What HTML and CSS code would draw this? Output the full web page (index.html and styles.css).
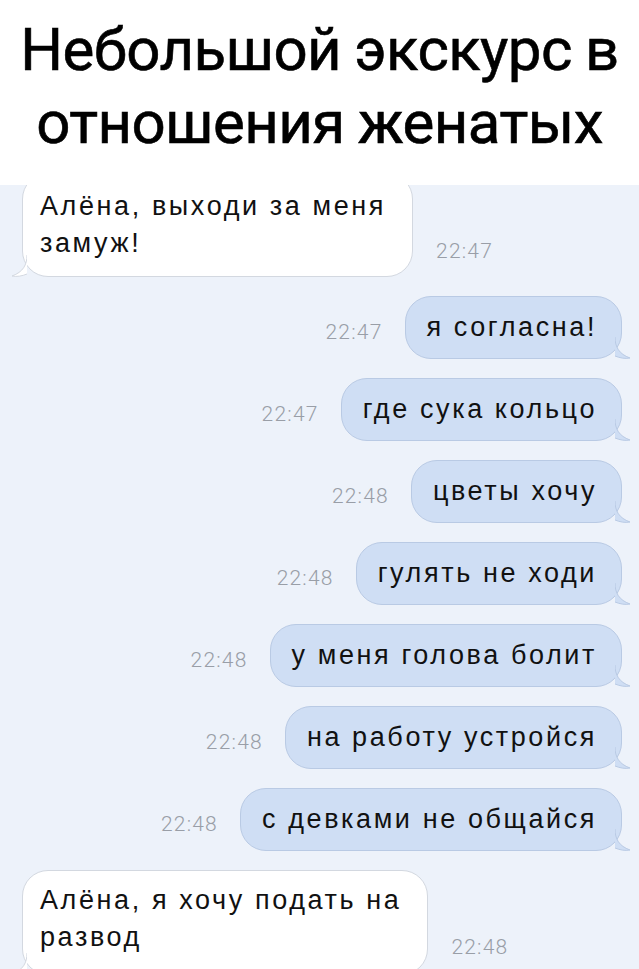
FILE: index.html
```html
<!DOCTYPE html>
<html lang="ru">
<head>
  <meta charset="UTF-8" />
  <title>Небольшой экскурс</title>
  <link rel="stylesheet" href="styles.css">
</head>
<body>

  <h1 class="title">Небольшой экскурс в<br>отношения женатых</h1>

  <div class="chat">
    <div class="row in first">
      <div class="bubble">Алёна, выходи за меня<br>замуж!
        <svg class="tail" viewBox="0 0 16 22"><path d="M16 0 C16 10 12 17 1 21 C6 22 11 21 16 19" /></svg>
      </div>
      <span class="time">22:47</span>
    </div>

    <div class="row out">
      <span class="time">22:47</span>
      <div class="bubble">я согласна!
        <svg class="tail" viewBox="0 0 16 22"><path d="M0 0 C0 10 4 17 15 21 C10 22 5 21 0 19" /></svg>
      </div>
    </div>

    <div class="row out">
      <span class="time">22:47</span>
      <div class="bubble">где сука кольцо
        <svg class="tail" viewBox="0 0 16 22"><path d="M0 0 C0 10 4 17 15 21 C10 22 5 21 0 19" /></svg>
      </div>
    </div>

    <div class="row out">
      <span class="time">22:48</span>
      <div class="bubble">цветы хочу
        <svg class="tail" viewBox="0 0 16 22"><path d="M0 0 C0 10 4 17 15 21 C10 22 5 21 0 19" /></svg>
      </div>
    </div>

    <div class="row out">
      <span class="time">22:48</span>
      <div class="bubble">гулять не ходи
        <svg class="tail" viewBox="0 0 16 22"><path d="M0 0 C0 10 4 17 15 21 C10 22 5 21 0 19" /></svg>
      </div>
    </div>

    <div class="row out">
      <span class="time">22:48</span>
      <div class="bubble">у меня голова болит
        <svg class="tail" viewBox="0 0 16 22"><path d="M0 0 C0 10 4 17 15 21 C10 22 5 21 0 19" /></svg>
      </div>
    </div>

    <div class="row out">
      <span class="time">22:48</span>
      <div class="bubble">на работу устройся
        <svg class="tail" viewBox="0 0 16 22"><path d="M0 0 C0 10 4 17 15 21 C10 22 5 21 0 19" /></svg>
      </div>
    </div>

    <div class="row out">
      <span class="time">22:48</span>
      <div class="bubble">с девками не общайся
        <svg class="tail" viewBox="0 0 16 22"><path d="M0 0 C0 10 4 17 15 21 C10 22 5 21 0 19" /></svg>
      </div>
    </div>

    <div class="row in last">
      <div class="bubble">Алёна, я хочу подать на<br>развод
        <svg class="tail" viewBox="0 0 16 22"><path d="M16 0 C16 10 12 17 1 21 C6 22 11 21 16 19" /></svg>
      </div>
      <span class="time">22:48</span>
    </div>
  </div>

</body>
</html>
```

FILE: styles.css
```css
body {
  margin: 0;
  background: #fff;
  font-family: "Liberation Sans", Arial, sans-serif;
  color: #111;
}

.title {
  margin: 0;
  height: 185px;
  padding-top: 13px;
  box-sizing: border-box;
  text-align: center;
  font-family: Roboto, "Liberation Sans", sans-serif;
  font-weight: 400;
  font-size: 60px;
  line-height: 73px;
  letter-spacing: -0.6px;
  word-spacing: -1px;
  color: #000;
  -webkit-text-stroke: 0.6px #000;
}

.chat {
  height: 784px;
  overflow: hidden;
  background: #edf2fa;
  padding: 0 17px 0 22px;
  display: flex;
  flex-direction: column;
  gap: 19px;
}

.row {
  display: flex;
  align-items: center;
  gap: 22px;
}
.row.out { justify-content: flex-end; }
.row.in { align-items: flex-end; gap: 23px; }
.row.first { margin-top: -12px; }

.bubble {
  position: relative;
  font-size: 27px;
  letter-spacing: 2.6px;
  line-height: 33px;
  padding: 14px 24px 14px 21px;
  border-radius: 26px;
  border: 1px solid #b9cae4;
  background: #cfdef4;
  white-space: nowrap;
}

.in .bubble {
  background: #fff;
  border-color: #d3d8e0;
  line-height: 37px;
  padding: 14px 26px 14px 17px;
}
.last .bubble { padding-top: 11px; padding-bottom: 18px; }

.time {
  font-family: Roboto, "Liberation Sans", sans-serif;
  font-weight: 300;
  font-size: 21px;
  letter-spacing: 1.2px;
  color: #999ea7;
  padding-top: 8px;
}
.in .time { padding-bottom: 14px; }
.last .time { padding-bottom: 16px; }

.tail {
  position: absolute;
  bottom: -1px;
  width: 16px;
  height: 22px;
  fill: #cfdef4;
  stroke: #b9cae4;
  stroke-width: 1;
}
.out .tail { right: -10px; }
.in .tail {
  left: -12px;
  fill: #fff;
  stroke: #d3d8e0;
}
```
